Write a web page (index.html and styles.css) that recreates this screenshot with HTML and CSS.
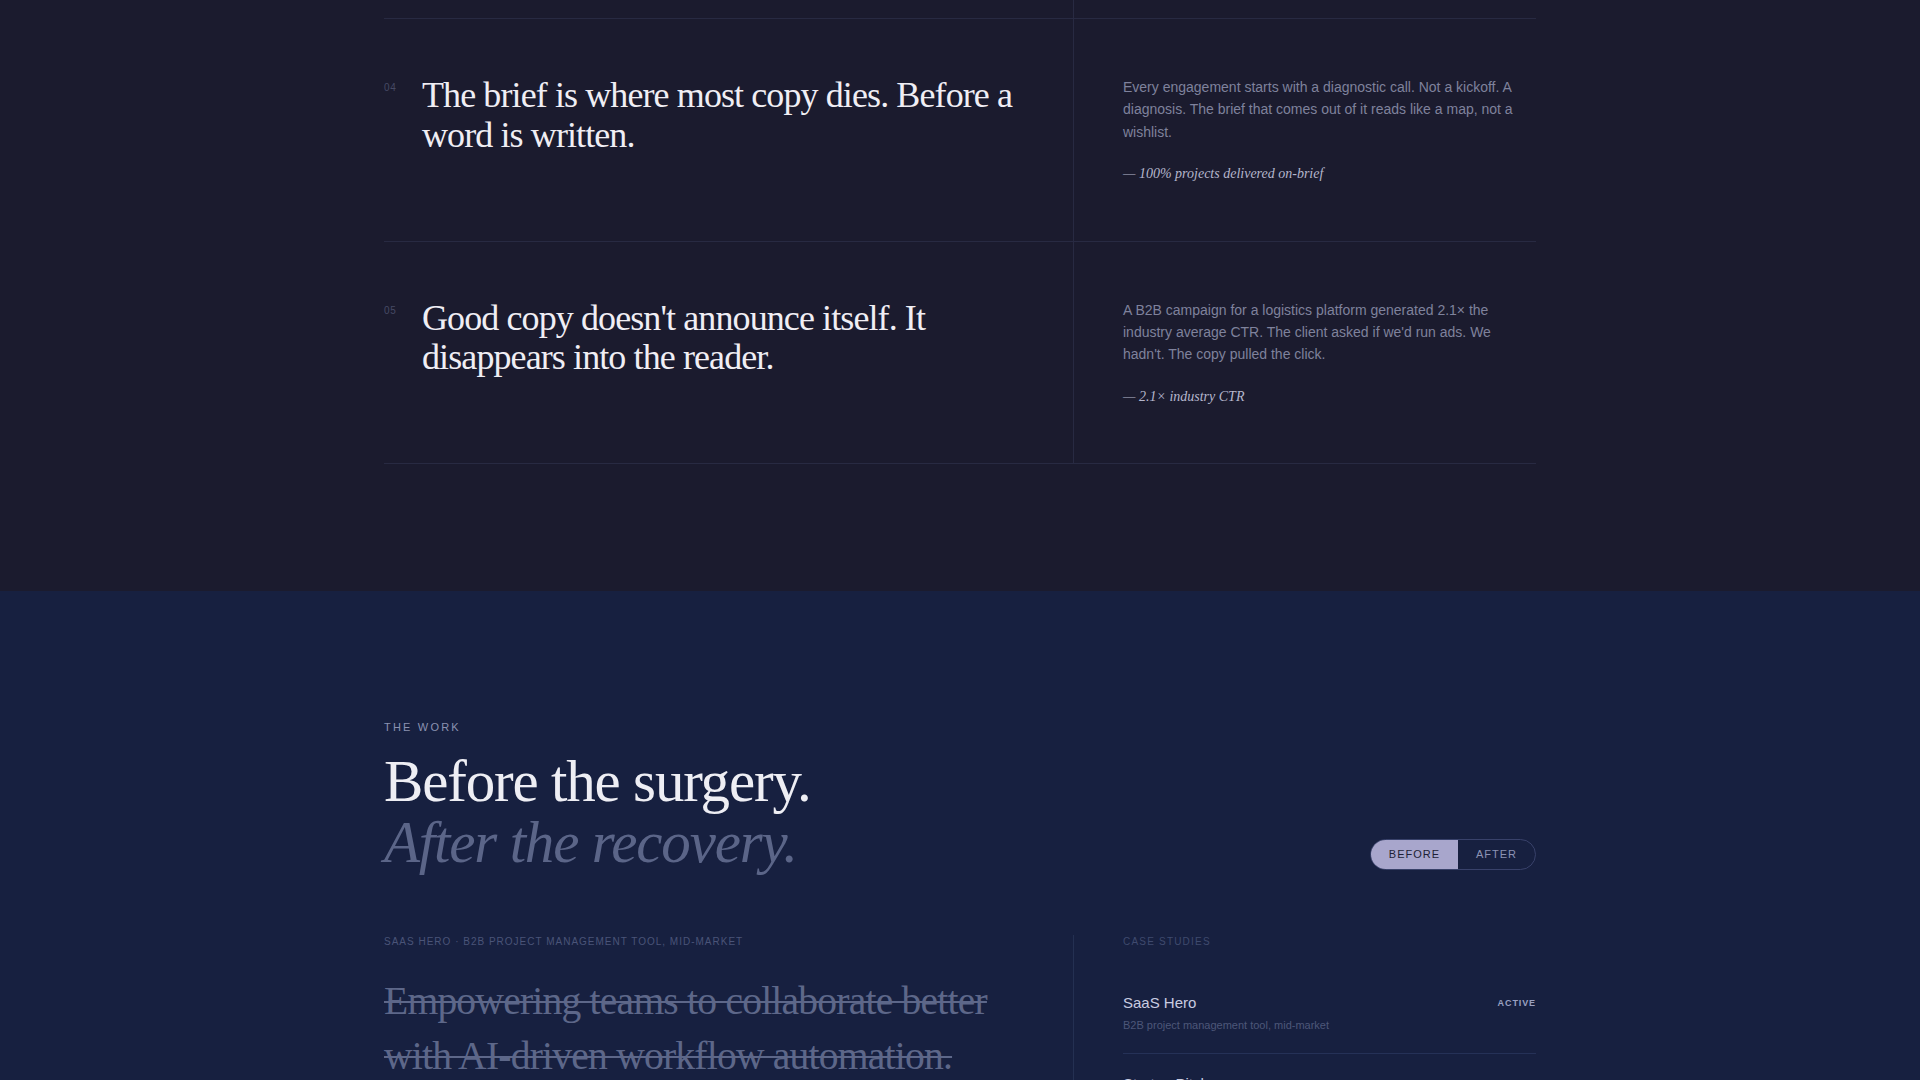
FILE: index.html
```html
<!DOCTYPE html>
<html lang="en">
<head>
  <meta charset="UTF-8">
  <meta name="viewport" content="width=device-width, initial-scale=1.0">
  <title>The Work</title>
  <link rel="stylesheet" href="styles.css">
</head>
<body>
  <section class="principles">
    <div class="wrap">
      <div class="row row-tail">
        <div class="row-left"></div>
        <div class="row-right"></div>
      </div>

      <div class="row">
        <div class="row-left">
          <span class="num">04</span>
          <h3>The brief is where most copy dies. Before a word is written.</h3>
        </div>
        <div class="row-right">
          <p>Every engagement starts with a diagnostic call. Not a kickoff. A diagnosis. The brief that comes out of it reads like a map, not a wishlist.</p>
          <p class="proof">— 100% projects delivered on-brief</p>
        </div>
      </div>

      <div class="row">
        <div class="row-left">
          <span class="num">05</span>
          <h3>Good copy doesn't announce itself. It disappears into the reader.</h3>
        </div>
        <div class="row-right">
          <p>A B2B campaign for a logistics platform generated 2.1× the industry average CTR. The client asked if we'd run ads. We hadn't. The copy pulled the click.</p>
          <p class="proof">— 2.1× industry CTR</p>
        </div>
      </div>
    </div>
  </section>

  <section class="work">
    <div class="wrap">
      <div class="work-head">
        <div>
          <div class="eyebrow">The Work</div>
          <h2>Before the surgery.<em>After the recovery.</em></h2>
        </div>
        <div class="toggle">
          <button class="active">Before</button>
          <button>After</button>
        </div>
      </div>

      <div class="work-grid">
        <div class="sample">
          <div class="sample-label">SaaS Hero · B2B project management tool, mid-market</div>
          <p class="sample-copy"><s>Empowering teams to collaborate better with AI-driven workflow automation.</s></p>
        </div>
        <aside class="cases">
          <div class="cases-label">Case Studies</div>
          <div class="case">
            <div class="case-top"><span class="case-name">SaaS Hero</span><span class="case-tag">Active</span></div>
            <div class="case-sub">B2B project management tool, mid-market</div>
          </div>
          <div class="case">
            <div class="case-top"><span class="case-name">Startup Pitch</span></div>
            <div class="case-sub">Seed-stage fintech, investor deck</div>
          </div>
        </aside>
      </div>
    </div>
  </section>
</body>
</html>
```

FILE: styles.css
```css
body {
  margin: 0;
  font-family: "Liberation Sans", Arial, sans-serif;
  color: #e8e8f0;
  background: #1b1b2e;
}

.wrap {
  width: 1152px;
  margin: 0 auto;
}

h2, h3, p {
  margin: 0;
}

/* principles list */

.principles {
  background: #1b1b2e;
  padding-bottom: 127px;
}

.row {
  display: grid;
  grid-template-columns: 690px 1fr;
  border-bottom: 1px solid #282a42;
}

.row-tail {
  height: 18px;
}

.row-left {
  display: flex;
  align-items: flex-start;
  padding: 57px 48px 0 0;
  border-right: 1px solid #282a42;
}

.row-tail .row-left {
  padding: 0;
}

.num {
  width: 38px;
  flex-shrink: 0;
  margin-top: 6px;
  font-size: 10px;
  line-height: 12px;
  letter-spacing: 0.06em;
  color: #464a64;
}

.row h3 {
  font-family: "Liberation Serif", "Times New Roman", serif;
  font-weight: 400;
  font-size: 36px;
  line-height: 1.1;
  letter-spacing: -0.025em;
  color: #f0eef4;
}

.row-right {
  padding: 57px 0 55px 49px;
}

.row-tail .row-right {
  padding: 0;
}

.row-right p {
  max-width: 400px;
  font-size: 14px;
  line-height: 1.6;
  color: #7f829c;
}

.row-right .proof {
  margin-top: 20px;
  font-family: "Liberation Serif", "Times New Roman", serif;
  font-style: italic;
  color: #b4b6cc;
}

/* the work */

.work {
  background: #172040;
  padding-top: 128px;
  height: 400px;
  overflow: hidden;
}

.work-head {
  display: flex;
  justify-content: space-between;
  align-items: flex-end;
}

.eyebrow {
  font-size: 11px;
  line-height: 16px;
  letter-spacing: 0.2em;
  text-transform: uppercase;
  color: #8b92b0;
  margin-bottom: 16px;
}

.work h2 {
  font-family: "Liberation Serif", "Times New Roman", serif;
  font-weight: 400;
  font-size: 59px;
  line-height: 1.04;
  letter-spacing: -0.02em;
  color: #eeeef4;
}

.work h2 em {
  display: block;
  color: #5b6588;
}

.toggle {
  display: flex;
  border: 1px solid #38416a;
  border-radius: 16px;
  overflow: hidden;
  margin-bottom: 4px;
}

.toggle button {
  border: 0;
  background: none;
  padding: 8px 18px;
  font-family: "Liberation Sans", Arial, sans-serif;
  font-size: 11px;
  line-height: 13px;
  letter-spacing: 0.09em;
  text-transform: uppercase;
  color: #8c93b4;
}

.toggle .active {
  background: #a8a6cc;
  color: #1e1f36;
}

.work-grid {
  display: grid;
  grid-template-columns: 690px 1fr;
  margin-top: 61px;
}

.sample {
  border-right: 1px solid #243052;
  padding-right: 48px;
}

.sample-label {
  font-size: 10px;
  line-height: 14px;
  letter-spacing: 0.1em;
  text-transform: uppercase;
  color: #4a5478;
}

.sample-copy {
  margin-top: 25px;
  font-family: "Liberation Serif", "Times New Roman", serif;
  font-size: 39.6px;
  line-height: 1.39;
  letter-spacing: -0.02em;
  color: #5d6789;
}

.sample-copy s {
  text-decoration-thickness: 2px;
}

.cases {
  padding-left: 49px;
}

.cases-label {
  font-size: 10px;
  line-height: 14px;
  letter-spacing: 0.12em;
  text-transform: uppercase;
  color: #3f4a6e;
  margin-bottom: 24px;
}

.case {
  padding: 20px 0;
  border-bottom: 1px solid #253157;
}

.case-top {
  display: flex;
  justify-content: space-between;
  align-items: center;
}

.case-name {
  font-size: 15px;
  line-height: 20px;
  color: #c9cce0;
}

.case-tag {
  font-size: 9px;
  font-weight: 700;
  letter-spacing: 0.1em;
  text-transform: uppercase;
  color: #9aa0c0;
}

.case-sub {
  margin-top: 4px;
  font-size: 11px;
  line-height: 16px;
  color: #4d5779;
}
```
